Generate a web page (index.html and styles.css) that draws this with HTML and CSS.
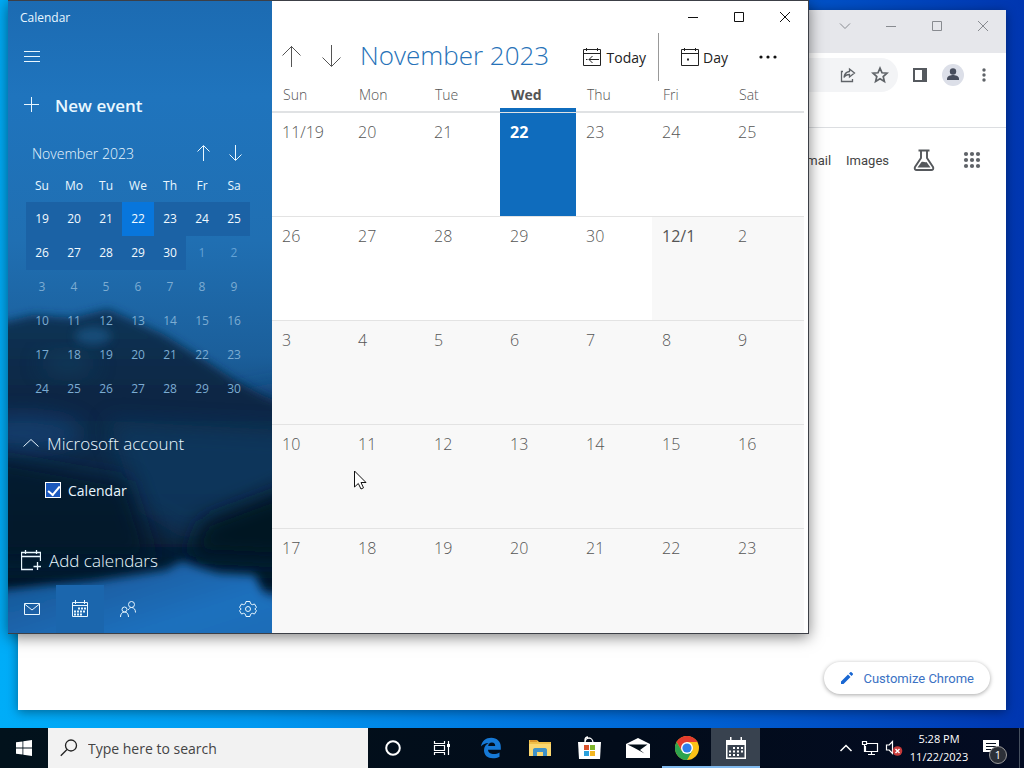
FILE: index.html
```html
<!DOCTYPE html>
<html lang="en">
<head>
<meta charset="utf-8">
<title>Calendar</title>
<link rel="stylesheet" href="styles.css">
</head>
<body>
<div class="desktop">
  <main class="workspace">
    <section class="window browser" aria-label="Browser">
      <div class="tabstrip">
        <button class="caption" aria-label="Search tabs"><svg width="12" height="12" viewBox="0 0 12 12"><path d="M1 3.500l5 5 5-5"/></svg></button>
        <button class="caption" aria-label="Minimize"><svg width="12" height="12" viewBox="0 0 12 12"><path d="M1 6.500h10"/></svg></button>
        <button class="caption" aria-label="Maximize"><svg width="12" height="12" viewBox="0 0 12 12"><path d="M1.500 1.500h9v9h-9z"/></svg></button>
        <button class="caption" aria-label="Close"><svg width="12" height="12" viewBox="0 0 12 12"><path d="M1 1l10 10M11 1L1 11"/></svg></button>
      </div>
      <div class="toolbar">
        <div class="address">
          <button class="tool" aria-label="Share"><svg width="18" height="18" viewBox="0 0 18 18"><path d="M4 5.500H2.500v10h11V13M10.500 3l5 4-5 4V8.500C7.500 8.500 6 9.500 5 11.500c.3-3.500 2.300-5.500 5.500-6z" fill="none" stroke="#5f6368" stroke-width="1.300"/></svg></button>
          <button class="tool" aria-label="Bookmark"><svg width="18" height="18" viewBox="0 0 18 18"><path d="M9 2.200l2 4.600 5 .4-3.800 3.300 1.200 4.900L9 12.800l-4.400 2.600 1.200-4.900L2 7.200l5-.4z" fill="none" stroke="#5f6368" stroke-width="1.700"/></svg></button>
        </div>
        <button class="tool" aria-label="Side panel"><svg width="16" height="16" viewBox="0 0 16 16"><path d="M1 1h14v14H1zM3 3v10h7V3z" fill="#55595e" fill-rule="evenodd"/></svg></button>
        <button class="tool profile" aria-label="Profile"><svg width="22" height="22" viewBox="0 0 22 22"><circle cx="11" cy="11" r="11" fill="#dcdfe8"/><circle cx="11" cy="7.500" r="3.200" fill="#474d5c"/><path d="M5 16v-1.500c0-2.500 4-3.500 6-3.500s6 1 6 3.500V16z" fill="#474d5c"/></svg></button>
        <button class="tool" aria-label="Menu"><svg width="16" height="16" viewBox="0 0 16 16" fill="#5f6368"><circle cx="8" cy="3" r="1.700"/><circle cx="8" cy="8" r="1.700"/><circle cx="8" cy="13" r="1.700"/></svg></button>
      </div>
      <div class="bookmarks"></div>
      <nav class="google-nav">
        <a href="#">Gmail</a>
        <a href="#">Images</a>
        <button class="lab" aria-label="Search Labs"><svg width="22" height="24" viewBox="0 0 22 24"><path d="M5.500 2.500h11M8 3v7L2 19c-.8 1.700 0 3 1.800 3h14.400c1.800 0 2.600-1.300 1.800-3l-6-9V3" fill="none" stroke="#55585c" stroke-width="1.900"/><path d="M4.500 19.500l4-5.500c2-1 3 .7 5 0l4 5.500z" fill="#55585c"/></svg></button>
        <button class="apps" aria-label="Google apps"><svg width="18" height="18" viewBox="0 0 18 18" fill="#5f6368"><circle cx="3" cy="3" r="2.100"/><circle cx="9" cy="3" r="2.100"/><circle cx="15" cy="3" r="2.100"/><circle cx="3" cy="9" r="2.100"/><circle cx="9" cy="9" r="2.100"/><circle cx="15" cy="9" r="2.100"/><circle cx="3" cy="15" r="2.100"/><circle cx="9" cy="15" r="2.100"/><circle cx="15" cy="15" r="2.100"/></svg></button>
      </nav>
      <button class="customize"><svg width="14" height="14" viewBox="0 0 14 14" fill="#1967d2"><path d="M1 10.500V13h2.500l7-7L8 3.500zM9 2.600L11.500 5l1.300-1.200c.4-.4.400-.8 0-1.200L11.500 1.200c-.4-.4-.8-.4-1.200 0z"/></svg>Customize Chrome</button>
    </section>

    <section class="window calendar" aria-label="Calendar">
      <aside class="sidebar">
        <svg class="scene" viewBox="0 0 264 632" preserveAspectRatio="none" aria-hidden="true">
          <defs>
            <linearGradient id="sky" x1="0" y1="0" x2="0" y2="1">
              <stop offset="0" stop-color="#1c6bb2"/><stop offset=".15" stop-color="#1f74bd"/><stop offset=".38" stop-color="#206fb2"/><stop offset=".56" stop-color="#1b5f9b"/><stop offset=".68" stop-color="#114577"/><stop offset="1" stop-color="#0a2c50"/>
            </linearGradient>
            <linearGradient id="hill" x1="0" y1="0" x2="0" y2="1">
              <stop offset="0" stop-color="#0e3457"/><stop offset=".3" stop-color="#0a2744"/><stop offset=".6" stop-color="#0a2b4b"/><stop offset="1" stop-color="#041729"/>
            </linearGradient>
            <linearGradient id="lake" x1="0" y1="0" x2="1" y2="1">
              <stop offset="0" stop-color="#164f8b"/><stop offset=".6" stop-color="#1d70bd"/><stop offset="1" stop-color="#1c69b2"/>
            </linearGradient>
            <filter id="soft" x="-30%" y="-30%" width="160%" height="160%"><feGaussianBlur stdDeviation="5"/></filter>
            <filter id="haze" x="-60%" y="-60%" width="220%" height="220%"><feGaussianBlur stdDeviation="11"/></filter>
          </defs>
          <rect width="264" height="632" fill="url(#sky)"/>
          <path d="M180 425L210 400 290 385V470H180z" fill="#123f72" filter="url(#haze)"/>
          <path d="M-20 325L25 314 65 317 100 308 122 318 155 333 195 358 225 378 250 392 290 410V590H-20z" fill="url(#hill)" filter="url(#soft)"/>
          <ellipse cx="85" cy="335" rx="18" ry="9" fill="#1d5b8e" opacity=".65" filter="url(#soft)"/>
          <ellipse cx="60" cy="363" rx="28" ry="10" fill="#164b6c" opacity=".5" filter="url(#haze)"/>
          <ellipse cx="15" cy="432" rx="60" ry="18" fill="#12457a" opacity=".7" filter="url(#haze)"/>
          <path d="M100 420L290 430V480L180 540L130 510z" fill="#0c3c66" opacity=".6" filter="url(#haze)"/>
          <path d="M-20 455L120 480 145 560H-20z" fill="#041626" opacity=".75" filter="url(#haze)"/>
          <path d="M290 485L195 520 180 555 290 560z" fill="#031321" filter="url(#haze)"/>
          <path d="M-20 592L40 584 85 580 125 574 158 569 174 560 190 566 210 572 247 574 255 592 290 602V660H-20z" fill="url(#lake)" filter="url(#soft)"/>
        </svg>
        <header class="app-title">Calendar</header>
        <button class="menu" aria-label="Menu"><svg width="16" height="16" viewBox="0 0 16 16"><path d="M0 2.500h16M0 7.500h16M0 12.500h16"/></svg></button>
        <button class="new-event"><svg width="16" height="16" viewBox="0 0 16 16"><path d="M0 7.500h15M7.500 0v15"/></svg>New event</button>
        <div class="month-head">
          <span>November 2023</span>
          <button aria-label="Previous month"><svg width="16" height="18" viewBox="0 0 16 18"><path d="M8.500 17V2M2.500 7.500l6-6 6 6"/></svg></button>
          <button aria-label="Next month"><svg width="16" height="18" viewBox="0 0 16 18"><path d="M8.500 1v15M2.500 10.500l6 6 6-6"/></svg></button>
        </div>
        <table class="mini">
          <thead><tr><th>Su</th><th>Mo</th><th>Tu</th><th>We</th><th>Th</th><th>Fr</th><th>Sa</th></tr></thead>
          <tbody>
            <tr class="in"><td>19</td><td>20</td><td>21</td><td class="now">22</td><td>23</td><td>24</td><td>25</td></tr>
            <tr class="in"><td>26</td><td>27</td><td>28</td><td>29</td><td>30</td><td class="out">1</td><td class="out">2</td></tr>
            <tr><td>3</td><td>4</td><td>5</td><td>6</td><td>7</td><td>8</td><td>9</td></tr>
            <tr><td>10</td><td>11</td><td>12</td><td>13</td><td>14</td><td>15</td><td>16</td></tr>
            <tr><td>17</td><td>18</td><td>19</td><td>20</td><td>21</td><td>22</td><td>23</td></tr>
            <tr><td>24</td><td>25</td><td>26</td><td>27</td><td>28</td><td>29</td><td>30</td></tr>
          </tbody>
        </table>
        <button class="account"><svg width="16" height="16" viewBox="0 0 16 16"><path d="M.5 11.500l7.500-7 7.500 7"/></svg>Microsoft account</button>
        <label class="cal-option"><input type="checkbox" checked>Calendar</label>
        <button class="add"><svg width="20" height="22" viewBox="0 0 20 22"><path d="M12 20.500H.5v-17h19V12M.5 7.500h19M4.500 1v4M15.500 1v4M16.500 13v8M12.500 17.500h8" stroke-width="1.300"/></svg>Add calendars</button>
        <nav class="switcher">
          <button aria-label="Mail"><svg width="16" height="16" viewBox="0 0 16 16"><path d="M.5 2.500h15v11H.5zM.5 3l7.500 6 7.500-6"/></svg></button>
          <button class="active" aria-label="Calendar"><svg width="16" height="18" viewBox="0 0 16 18"><path d="M.5 2.500h15v14H.5zM.5 5.500h15M3.500 0v4M12.500 0v4"/><path d="M6 8.500h8M2 11.500h12M2 14.500h9" stroke-width="2" stroke-dasharray="2 1"/></svg></button>
          <button aria-label="People"><svg width="18" height="18" viewBox="0 0 18 18"><circle cx="5.500" cy="9.500" r="2.500"/><path d="M1.500 17c0-3 1.500-5 4-5s4 2 4 5"/><circle cx="12.500" cy="4.500" r="3"/><path d="M9 10c1-1.500 2-2.500 3.500-2.500 2.500 0 4 2 4 5"/></svg></button>
          <button class="settings" aria-label="Settings"><svg width="18" height="18" viewBox="0 0 18 18"><path d="M7 1.500h4l.5 2.200 1.800 1 2.200-.7 2 3.400L15.800 9l1.700 1.600-2 3.400-2.200-.7-1.800 1-.5 2.200H7l-.5-2.200-1.800-1-2.200.7-2-3.400L2.200 9 .5 7.400l2-3.400 2.200.7 1.800-1z"/><circle cx="9" cy="9" r="2.500"/></svg></button>
        </nav>
      </aside>

      <div class="main">
        <div class="captions">
          <button class="caption" aria-label="Minimize"><svg width="12" height="12" viewBox="0 0 12 12"><path d="M1 6.500h10"/></svg></button>
          <button class="caption" aria-label="Maximize"><svg width="12" height="12" viewBox="0 0 12 12"><path d="M1.500 1.500h9v9h-9z"/></svg></button>
          <button class="caption" aria-label="Close"><svg width="12" height="12" viewBox="0 0 12 12"><path d="M1 1l10 10M11 1L1 11"/></svg></button>
        </div>
        <div class="commands">
          <button class="step" aria-label="Previous"><svg width="20" height="24" viewBox="0 0 20 24"><path d="M9.500 22V1M.5 10.500l9-9 9 9"/></svg></button>
          <button class="step" aria-label="Next"><svg width="20" height="24" viewBox="0 0 20 24"><path d="M9.500 0v21M.5 12.500l9 9 9-9"/></svg></button>
          <h1>November 2023</h1>
          <button class="cmd today"><svg width="18" height="20" viewBox="0 0 18 20"><path d="M.5 2.500h17v16H.5zM.5 6.500h17M3.500 1v3M14.500 1v3M6 12.500h10M9.500 9L6 12.500 9.500 16M3 12.500h1.500"/></svg>Today</button>
          <button class="cmd day"><svg width="18" height="20" viewBox="0 0 18 20"><path d="M.5 2.500h17v16H.5zM.5 6.500h17M3.500 1v3M14.500 1v3"/><path d="M6 12.500h2" stroke-width="2"/></svg>Day</button>
          <button class="more" aria-label="More"><svg width="18" height="4" viewBox="0 0 18 4"><circle cx="2" cy="2" r="1.600"/><circle cx="9" cy="2" r="1.600"/><circle cx="16" cy="2" r="1.600"/></svg></button>
        </div>
        <table class="month">
          <thead><tr><th>Sun</th><th>Mon</th><th>Tue</th><th class="now">Wed</th><th>Thu</th><th>Fri</th><th>Sat</th></tr></thead>
          <tbody>
            <tr><td>11/19</td><td>20</td><td>21</td><td class="now">22</td><td>23</td><td>24</td><td>25</td></tr>
            <tr><td>26</td><td>27</td><td>28</td><td>29</td><td>30</td><td class="next first">12/1</td><td class="next">2</td></tr>
            <tr class="next"><td>3</td><td>4</td><td>5</td><td>6</td><td>7</td><td>8</td><td>9</td></tr>
            <tr class="next"><td>10</td><td>11</td><td>12</td><td>13</td><td>14</td><td>15</td><td>16</td></tr>
            <tr class="next"><td>17</td><td>18</td><td>19</td><td>20</td><td>21</td><td>22</td><td>23</td></tr>
          </tbody>
        </table>
      </div>
    </section>
    <svg class="pointer" width="13" height="20" viewBox="0 0 13 20" aria-hidden="true"><path d="M.5 1v16l3.800-3.500L7 19l2.500-1.200L7 12.500h5z" fill="#fff" stroke="#111"/></svg>
  </main>

  <footer class="taskbar">
    <button class="start" aria-label="Start"><svg width="16" height="16" viewBox="0 0 16 16" fill="#fff"><path d="M0 2.300L6.500 1.400v6.100H0zM7.300 1.300L16 0v7.500H7.300zM0 8.400h6.500v6.200L0 13.700zM7.300 8.400H16V16l-8.700-1.300z"/></svg></button>
    <label class="search"><svg width="18" height="18" viewBox="0 0 18 18"><circle cx="11" cy="6.500" r="5.500"/><path d="M7 10.500L.8 16.700"/></svg><input type="text" placeholder="Type here to search" aria-label="Search"></label>
    <button class="task" aria-label="Cortana"><svg width="18" height="18" viewBox="0 0 18 18"><circle cx="9" cy="9" r="6.800" fill="none" stroke="#fff" stroke-width="2"/></svg></button>
    <button class="task" aria-label="Task view"><svg width="18" height="18" viewBox="0 0 18 18"><path d="M1.500 2v2.500h10V2M1.500 16v-2.500h10V16M1.500 6.500h10v5h-10zM15.500 2v14" fill="none" stroke="#fff" stroke-width="1.200"/><path d="M14 5h3v3h-3z" fill="#fff"/></svg></button>
    <button class="task" aria-label="Edge"><svg width="22" height="22" viewBox="0 0 22 22"><path d="M1 9.500C1.800 4 6 .8 11.200.8c6 0 9.600 4 9.600 9.200v2.700H8c.2 3 3 4.300 5.800 4.300 2 0 4-.6 5.700-1.600v4.300c-2 1-4.200 1.500-6.700 1.500-5.200 0-8.800-3-8.800-8 0-3.300 1.900-6 4.700-7.200C5.200 6.200 2.800 7.200 1 9.500zM8.200 9h7c0-2-1-3.500-3.300-3.500S8.500 7 8.200 9z" fill="#1679d6"/></svg></button>
    <button class="task" aria-label="File Explorer"><svg width="22" height="20" viewBox="0 0 22 20"><path d="M0 2h8l2 2h12v14H0z" fill="#f0c04a"/><path d="M1 2h7v2H1z" fill="#d9932a"/><path d="M0 6h22v12H0z" fill="#fbd770"/><path d="M4 18v-6c0-1 .5-2 2-2h10c1.500 0 2 1 2 2v6h-4v-4H8v4z" fill="#3f91c8"/></svg></button>
    <button class="task" aria-label="Store"><svg width="24" height="24" viewBox="0 0 24 24"><path d="M8 7V4c0-2 1-3 3-3M8 7c0-3 2-5 4-5s4 2 4 5" fill="none" stroke="#fff" stroke-width="1.300"/><path d="M1 6h23l-1 17H2z" fill="#fff"/><path d="M7 9h5v5H7z" fill="#d9522c"/><path d="M13 9h5v5h-5z" fill="#7fb52b"/><path d="M7 15h5v5H7z" fill="#2ba1dc"/><path d="M13 15h5v5h-5z" fill="#f3b620"/></svg></button>
    <button class="task" aria-label="Mail"><svg width="24" height="20" viewBox="0 0 24 20"><path d="M0 6L12 0l12 6v14H0z" fill="#fff"/><path d="M1.500 6.500l20 0-7.500 5.500 4.500 3.500L8.500 10z" fill="#020e18"/></svg></button>
    <button class="task open" aria-label="Chrome"><svg width="24" height="24" viewBox="0 0 24 24"><circle cx="12" cy="12" r="12" fill="#fbc116"/><path d="M1.600 6A12 12 0 0 1 22.400 6H12L6.800 15z" fill="#e33b2e"/><path d="M1.600 6A12 12 0 0 0 12 24l5.200-9H6.800z" fill="#2ea44f"/><circle cx="12" cy="12" r="6" fill="#fff"/><circle cx="12" cy="12" r="4.600" fill="#2f7de9"/></svg></button>
    <button class="task open current" aria-label="Calendar"><svg width="20" height="22" viewBox="0 0 20 22"><path d="M0 3h4V0h1.500v3h9V0H16v3h4v19H0zM1.500 8v12.500h17V8z" fill="#fff" fill-rule="evenodd"/><path d="M7 11h10M3 14.500h14M3 18h10" stroke="#fff" stroke-width="2" stroke-dasharray="2 2" fill="none"/></svg></button>
    <div class="tray">
      <button aria-label="Show hidden icons"><svg width="14" height="10" viewBox="0 0 14 10"><path d="M1.500 8L7 2.500 12.500 8" stroke-width="1.500"/></svg></button>
      <button aria-label="Network"><svg width="18" height="16" viewBox="0 0 18 16"><path d="M5 3.500h11.500v8H4.500V6M10.500 11.500v3M7 14.500h7M1.500 1.500h4v3h-4zM3.500 5v7" stroke-width="1.200"/></svg></button>
      <button aria-label="Volume muted"><svg width="18" height="18" viewBox="0 0 18 18"><path d="M1.500 6h2.700L7.500 2.500v12L4.200 11H1.500z" stroke-width="1.200"/><circle cx="12.500" cy="12" r="4.800" fill="#c63a3a" stroke="none"/><path d="M10.500 10l4 4M14.500 10l-4 4" stroke-width="1.400"/></svg></button>
      <time class="clock" datetime="2023-11-22T17:28"><span>5:28 PM</span><span>11/22/2023</span></time>
      <button class="notice" aria-label="1 notification"><svg width="18" height="18" viewBox="0 0 18 18"><path d="M1 1h16v12h-4v4l-4-4H1z" fill="#fff" stroke="none"/><path d="M4 4.500h10M4 7.500h10M4 10.500h7" stroke="#06101f" stroke-width="1.200"/></svg><span class="badge">1</span></button>
    </div>
  </footer>
</div>
</body>
</html>
```
FILE: styles.css
```css
* { box-sizing: border-box; }
body { margin: 0; font-family: "Open Sans", "Noto Sans", sans-serif; font-size: 13px; }
button { margin: 0; padding: 0; border: 0; background: none; color: inherit; font: inherit; }
svg { display: block; flex: none; }
table { border-spacing: 0; }
.desktop {
  display: flex;
  flex-direction: column;
  height: 100vh;
  min-height: 680px;
  overflow: hidden;
  background: linear-gradient(90deg, #00adf8 0%, #0098f0 25%, #0078e0 50%, #0058cc 75%, #003db6 95%, #0036b0 100%);
}
.workspace { position: relative; flex: 1; }
.window { position: absolute; display: flex; }

.caption { display: grid; place-items: center; width: 46px; height: 32px; }
.caption svg { fill: none; stroke: #111; stroke-width: 1; }

/* browser */
.browser {
  inset: 10px 18px 18px 18px;
  flex-direction: column;
  background: #fff;
  box-shadow: 0 2px 10px rgba(0, 0, 0, .4);
}
.tabstrip { display: flex; justify-content: flex-end; height: 43px; background: #e6e7eb; }
.tabstrip svg { stroke: #888b90; }
.toolbar { display: flex; align-items: center; gap: 12px; height: 43px; padding: 0 12px 0 90px; }
.address { display: flex; flex: 1; align-items: center; justify-content: flex-end; gap: 12px; height: 34px; padding-right: 8px; border-radius: 17px; background: #f3f4f6; }
.tool { display: grid; place-items: center; width: 20px; height: 24px; }
.bookmarks { height: 32px; border-bottom: 1px solid #dcdee1; }
.google-nav { display: flex; align-items: center; justify-content: flex-end; height: 64px; padding-right: 25px; font: 13px Roboto, sans-serif; }
.google-nav a { margin-right: 15px; color: #444; text-decoration: none; }
.lab { margin: 0 28px 0 9px; }
.customize {
  display: flex;
  align-items: center;
  gap: 9px;
  align-self: flex-end;
  height: 32px;
  margin: auto 16px 16px 0;
  padding: 0 16px;
  border-radius: 16px;
  background: #fff;
  box-shadow: 0 1px 4px rgba(0, 0, 0, .35);
  color: #3b72c4;
  font: 13px Roboto, sans-serif;
}

/* calendar window */
.calendar {
  inset: 0 215px 94px 8px;
  border: solid #3c3f46;
  border-width: 1px 1px 1px 0;
  background: #fff;
  box-shadow: 0 3px 14px rgba(0, 0, 0, .5);
}
.sidebar { position: relative; z-index: 0; display: flex; flex: 0 0 264px; flex-direction: column; overflow: hidden; color: #e9f7ff; }
.sidebar svg { fill: none; stroke: #e9f7ff; }
.sidebar .scene { position: absolute; inset: 0; z-index: -1; width: 100%; height: 100%; stroke: none; }
.app-title { height: 32px; padding-left: 12px; font-size: 12px; line-height: 34px; }
.menu { height: 48px; padding-left: 16px; }
.new-event { display: flex; align-items: center; gap: 15px; height: 48px; padding-left: 16px; font-size: 17px; font-weight: 600; }
.month-head { display: flex; align-items: center; height: 44px; padding: 4px 21px 0 24px; font-size: 14px; font-weight: 300; }
.month-head span { flex: 1; }
.month-head button { display: grid; place-items: center; width: 32px; height: 32px; }
.mini { display: block; padding: 0 22px 0 18px; font-size: 12px; text-align: center; }
.mini thead, .mini tbody { display: block; }
.mini tr { display: grid; grid-template-columns: repeat(7, 1fr); line-height: 34px; }
.mini thead tr { line-height: 26px; padding-bottom: 3px; }
.mini th, .mini td { padding: 0; font-weight: 400; }
.mini td { color: #7cacd2; }
.mini .in td { background: #1b62a5; color: #f2faff; }
.mini .in .now { background: #0876dc; }
.mini .in .out { background: none; color: #63a2d6; }
.account { display: flex; align-items: center; gap: 8px; height: 44px; margin-top: 15px; padding-left: 15px; font-size: 17px; font-weight: 300; }
.cal-option { display: flex; align-items: center; gap: 7px; height: 50px; padding-left: 37px; font-size: 14px; }
.cal-option input {
  width: 16px;
  height: 16px;
  margin: 0;
  appearance: none;
  border: 1px solid #fff;
  background: #1b58bd;
}
.cal-option input:checked::before { content: ""; display: block; width: 10px; height: 5px; margin: 3px 0 0 2px; border: solid #fff; border-width: 0 0 2px 2px; rotate: -50deg; }
.add { display: flex; align-items: center; gap: 8px; height: 50px; margin-top: auto; padding-left: 13px; font-size: 17px; font-weight: 300; }
.switcher { display: flex; height: 48px; }
.switcher button { display: grid; place-items: center; width: 48px; }
.switcher .active { background: #1b66ad; }
.switcher .settings { margin-left: auto; }

.main { display: flex; flex: 1; flex-direction: column; min-width: 0; color: #555; }
.captions { display: flex; justify-content: flex-end; height: 32px; }
.commands { display: flex; align-items: center; height: 48px; color: #222; }
.commands svg { fill: none; stroke: #222; }
.step { display: grid; place-items: center; width: 40px; height: 48px; }
.commands .step svg { stroke: #555; }
h1 { flex: 1; margin: 0 0 4px 8px; color: #2672b8; font-size: 26px; font-weight: 300; line-height: 40px; white-space: nowrap; }
.cmd { display: flex; align-items: center; gap: 6px; height: 48px; font-size: 14px; font-weight: 400; }
.today { padding-right: 12px; border-right: 1px solid #999; }
.day { gap: 4px; padding-left: 22px; }
.more { margin: 0 31px; }
.commands .more svg { fill: #111; stroke: none; }
.month { display: flex; flex: 1; flex-direction: column; margin-right: 4px; text-align: left; }
.month tr { display: grid; grid-template-columns: repeat(7, 1fr); }
.month thead tr { height: 32px; border-bottom: 2px solid #e0e2e4; }
.month th { padding: 0 0 0 11px; font-size: 14px; font-weight: 300; line-height: 27px; }
.month th.now { border-bottom: 4px solid #0f6cbd; font-weight: 700; }
.month tbody { display: grid; flex: 1; grid-template-rows: repeat(5, 1fr); }
.month tbody tr { border-bottom: 1px solid #e3e3e3; }
.month tbody tr:last-child { border-bottom: 0; }
.month td { padding: 7px 0 0 10px; font-size: 16px; font-weight: 300; line-height: 24px; }
.month td.now { background: #0f6cbd; color: #fff; font-weight: 700; }
.month .next { background: #f8f8f8; }
.month .first { font-weight: 400; }
.pointer { position: absolute; left: 354px; top: 470px; }

/* taskbar */
.taskbar { display: flex; height: 40px; background: linear-gradient(90deg, #02121c, #020c1a 60%, #030b22); color: #fff; }
.start { display: grid; place-items: center; width: 48px; }
.search { display: flex; flex: 0 0 320px; align-items: center; gap: 10px; padding-left: 12px; background: #f2f2f2; }
.search svg { fill: none; stroke: #222; stroke-width: 1.3; }
.search input { flex: 1; min-width: 0; padding: 0; border: 0; outline: 0; background: none; font: 14px "Open Sans", "Noto Sans", sans-serif; }
.search input::placeholder { color: #444; opacity: 1; }
.task { display: grid; place-items: center; width: 49px; }
.open { border-bottom: 2px solid #80b9ee; padding-top: 2px; }
.current { background-color: #38424f; }
.tray { display: flex; flex: 1; align-items: center; justify-content: flex-end; padding-right: 4px; }
.tray button { display: grid; place-items: center; width: 24px; height: 40px; }
.tray svg { fill: none; stroke: #fff; }
.clock { display: flex; flex-direction: column; width: 66px; font-size: 11px; line-height: 18px; text-align: center; }
.tray .notice { position: relative; width: 48px; padding-right: 10px; border-right: 1px solid #46505f; }
.badge { position: absolute; right: 12px; bottom: 4px; width: 18px; height: 18px; border: 1px solid #999; border-radius: 50%; background: #2c3038; font-size: 11px; line-height: 16px; }
```
